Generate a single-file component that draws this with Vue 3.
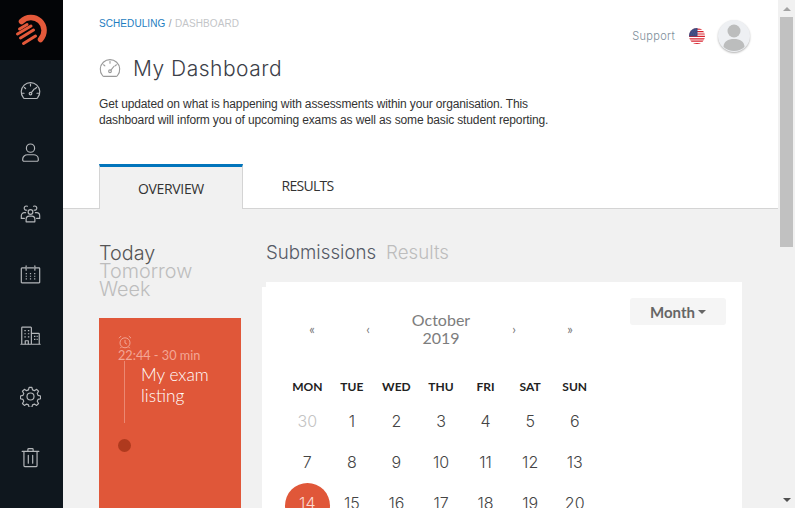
<script setup>
const weekdays = ['MON', 'TUE', 'WED', 'THU', 'FRI', 'SAT', 'SUN']
const days = [
  { n: 30, muted: true }, { n: 1 }, { n: 2 }, { n: 3 }, { n: 4 }, { n: 5 }, { n: 6 },
  { n: 7 }, { n: 8 }, { n: 9 }, { n: 10 }, { n: 11 }, { n: 12 }, { n: 13 },
  { n: 14, active: true }, { n: 15 }, { n: 16 }, { n: 17 }, { n: 18 }, { n: 19 }, { n: 20 }
]
</script>

<template>
  <div class="app">
    <aside class="sidebar">
      <div class="logo">
        <svg width="36" height="36" viewBox="14 12 36 36" fill="none" stroke="#e4593a" stroke-linecap="round">
          <path d="M21.500 21.500A12.500 12.500 0 1 1 40.500 39.500" stroke-width="5.500" />
          <path d="M27 24.500L19.500 29" stroke-width="3" />
          <path d="M31 26L17.500 34" stroke-width="3" />
          <path d="M33.500 30L20.500 38" stroke-width="3" />
          <path d="M35.500 36L23.500 43.500" stroke-width="3" />
        </svg>
      </div>
      <nav class="nav">
        <a class="nav-item">
          <svg class="ico" viewBox="0 0 24 24"><path d="M5.200 20h13.600a1.600 1.600 0 0 0 1.400-.9A10.600 10.600 0 1 0 3.800 19.100a1.600 1.600 0 0 0 1.400.9Z" /><circle cx="12" cy="14.400" r="1.500" /><path d="M13 13.300l3.400-4.300M12 3.600v2M5 7.400l1.400 1.200M19 7.400l-1.400 1.200M2.600 14h2M19.400 14h2" /></svg>
        </a>
        <a class="nav-item">
          <svg class="ico" viewBox="0 0 24 24"><circle cx="12" cy="7" r="4.700" /><path d="M4.500 22h15a1.400 1.400 0 0 0 1.400-1.400v-1.100c0-3-2.600-4.900-5.400-4.900h-7c-2.800 0-5.400 1.900-5.400 4.900v1.100A1.400 1.400 0 0 0 4.500 22Z" /></svg>
        </a>
        <a class="nav-item">
          <svg class="ico" viewBox="0 0 24 24"><circle cx="12" cy="10.200" r="2.700" /><path d="M7 21.500h10v-3c0-2-1.500-3.600-3.500-3.600h-3c-2 0-3.500 1.600-3.500 3.600Z" /><path d="M7.800 8.200a2.400 2.400 0 1 1 .6-4.400M16.200 8.200a2.400 2.400 0 1 0-.6-4.400" /><path d="M6.400 11H5C3 11 1.500 12.600 1.500 14.600v3H5M17.600 11H19c2 0 3.500 1.600 3.500 3.600v3H19" /></svg>
        </a>
        <a class="nav-item">
          <svg class="ico" viewBox="0 0 24 24"><path d="M6 4.500H2.200a.7.7 0 0 0-.7.7v15.600a.7.7 0 0 0 .7.7h19.600a.7.7 0 0 0 .7-.7V5.200a.7.7 0 0 0-.7-.7H18M8.500 4.500h7M7 2v5M17 2v5" /><path class="dots" d="M6.500 11h1.400M11.300 11h1.400M16.100 11h1.400M6.500 14h1.400M11.300 14h1.400M16.100 14h1.400M6.500 17h1.400M11.300 17h1.400M16.100 17h1.400" /></svg>
        </a>
        <a class="nav-item">
          <svg class="ico" viewBox="0 0 24 24"><path d="M2 22V3.200a.7.7 0 0 1 .7-.7h9.600a.7.7 0 0 1 .7.7V22M13 9.500h8.300a.7.7 0 0 1 .7.7V22M1 22h22" /><path class="dots" d="M5 6.500h1.600M9 6.500h1.600M5 10h1.600M9 10h1.600M5 13.500h1.600M9 13.500h1.600M16 13h1.600M19 13h1.200M16 16.500h1.600M19 16.500h1.200M6 22v-4h3.500v4" /></svg>
        </a>
        <a class="nav-item">
          <svg class="ico" viewBox="0 0 24 24"><circle cx="12" cy="12" r="4" /><path d="M10.400 1.500h3.200l.7 2.900 2.200.9 2.500-1.500 2.200 2.200-1.500 2.500.9 2.200 2.900.7v3.200l-2.900.7-.9 2.200 1.500 2.500-2.200 2.200-2.500-1.500-2.200.9-.7 2.900h-3.200l-.7-2.900-2.200-.9-2.500 1.500-2.200-2.200 1.500-2.500-.9-2.200-2.900-.7v-3.200l2.900-.7.9-2.200-1.500-2.500 2.200-2.200 2.500 1.500 2.200-.9Z" /></svg>
        </a>
        <a class="nav-item">
          <svg class="ico" viewBox="0 0 24 24"><path d="M2.500 5h19M9 5V2.800a1 1 0 0 1 1-1h4a1 1 0 0 1 1 1V5M4.500 5v16a1.500 1.500 0 0 0 1.500 1.500h12a1.500 1.500 0 0 0 1.500-1.500V5M9.500 9.500v9M14.500 9.500v9" /></svg>
        </a>
      </nav>
    </aside>

    <main class="main">
      <header class="header">
        <div class="header-left">
          <div class="crumbs"><span class="crumb-link">SCHEDULING</span> <span class="crumb-sep">/</span> <span class="crumb-cur">DASHBOARD</span></div>
          <div class="title-row">
            <svg class="title-ico" viewBox="0 0 24 24"><path d="M5.200 20h13.600a1.600 1.600 0 0 0 1.400-.9A10.600 10.600 0 1 0 3.800 19.100a1.600 1.600 0 0 0 1.400.9Z" /><circle cx="12" cy="14.400" r="1.500" /><path d="M13 13.300l3.400-4.300M12 3.600v2M5 7.400l1.400 1.200M19 7.400l-1.400 1.200" /></svg>
            <h1 class="title">My Dashboard</h1>
          </div>
          <p class="intro">Get updated on what is happening with assessments within your organisation. This dashboard will inform you of upcoming exams as well as some basic student reporting.</p>
        </div>
        <div class="header-right">
          <span class="support">Support</span>
          <svg class="flag" viewBox="0 0 16 16">
            <defs><clipPath id="flagclip"><circle cx="8" cy="8" r="8" /></clipPath></defs>
            <g clip-path="url(#flagclip)">
              <rect width="16" height="16" fill="#fff" />
              <path d="M0 1.200h16M0 3.600h16M0 6h16M0 8.400h16M0 10.800h16M0 13.200h16M0 15.600h16" stroke="#d8212c" stroke-width="1.200" />
              <rect width="8.500" height="8.400" fill="#3c4a80" />
              <path d="M2 2h.1M4 2h.1M6 2h.1M3 4h.1M5 4h.1M2 6h.1M4 6h.1M6 6h.1" stroke="#dfe3f2" stroke-width="1" />
            </g>
          </svg>
          <div class="avatar">
            <svg viewBox="0 0 32 32" width="32" height="32">
              <circle cx="16" cy="11" r="6.500" fill="#bcbdbd" />
              <path d="M5.500 27c0-5.500 4.500-8 10.500-8s10.500 2.500 10.500 8c-3 2.800-6.500 4-10.500 4s-7.500-1.200-10.500-4Z" fill="#bcbdbd" />
            </svg>
          </div>
        </div>
      </header>

      <div class="tabs">
        <div class="tab tab-active">OVERVIEW</div>
        <div class="tab tab-plain">RESULTS</div>
      </div>

      <section class="content">
        <div class="col-left">
          <div class="ranges">
            <div class="range range-on">Today</div>
            <div class="range">Tomorrow</div>
            <div class="range">Week</div>
          </div>
          <div class="event-card">
            <svg class="alarm" viewBox="0 0 14 14"><circle cx="7" cy="7.800" r="5" /><path d="M7 5v3l2 1.200M1 3.200 3.200 1M13 3.200 10.800 1M3.300 12 2.300 13.200M10.700 12l1 1.200" /></svg>
            <div class="event-time">22:44 - 30 min</div>
            <div class="event-body">
              <div class="rail">
                <span class="rail-line"></span>
                <span class="rail-dot"></span>
              </div>
              <div class="event-title">My exam listing</div>
            </div>
          </div>
        </div>

        <div class="col-right">
          <div class="panel-tabs">
            <span class="panel-tab panel-tab-on">Submissions</span>
            <span class="panel-tab">Results</span>
          </div>
          <div class="card-lip"></div>
          <div class="card">
            <div class="calendar">
              <div class="cal-nav">
                <span class="cal-arrow">«</span>
                <span class="cal-arrow">‹</span>
                <span class="cal-month">October<br />2019</span>
                <span class="cal-arrow">›</span>
                <span class="cal-arrow">»</span>
              </div>
              <div class="cal-grid">
                <div v-for="w in weekdays" :key="w" class="cal-head">{{ w }}</div>
                <div v-for="d in days" :key="d.n" class="cal-day" :class="{ muted: d.muted, active: d.active }"><span>{{ d.n }}</span></div>
              </div>
            </div>
            <div class="month-btn">Month<i class="caret"></i></div>
          </div>
        </div>
      </section>
    </main>

    <div class="scrollbar">
      <div class="sb-btn"><i class="sb-up"></i></div>
      <div class="sb-thumb"></div>
      <div class="sb-track"></div>
      <div class="sb-btn"><i class="sb-down"></i></div>
    </div>
  </div>
</template>

<style>
html, body { margin: 0; overflow: hidden; }
</style>

<style scoped>
.app { display: flex; width: 795px; height: 508px; overflow: hidden; background: #f1f1f1; font-family: "Liberation Sans", Arial, sans-serif; }

.sidebar { width: 63px; flex: none; background: #0f171e; display: flex; flex-direction: column; }
.logo { height: 60px; background: #030507; display: flex; align-items: center; justify-content: center; }
.nav { display: flex; flex-direction: column; padding: 1px 2px 0 0; }
.nav-item { height: 61px; display: flex; align-items: center; justify-content: center; }
.ico { width: 21px; height: 21px; fill: none; stroke: #b4b7ba; stroke-width: 1.350; stroke-linejoin: round; stroke-linecap: round; }
.ico .dots { stroke-width: 1.400; stroke-linecap: butt; }

.main { width: 715px; flex: none; display: flex; flex-direction: column; min-width: 0; }
.header { height: 164px; background: #fff; display: flex; justify-content: space-between; padding-left: 36px; box-sizing: border-box; }
.header-left { width: 470px; padding-top: 18px; }
.crumbs { font-size: 10px; line-height: 12px; letter-spacing: 0.080px; word-spacing: 0.500px; color: #c3c5c8; }
.crumb-link { color: #1d7dc0; }
.crumb-sep { color: #9a9a9a; }
.title-row { display: flex; align-items: center; margin-top: 25px; height: 28px; }
.title-ico { width: 22px; height: 22px; fill: none; stroke: #9a9a9a; stroke-width: 1.200; stroke-linecap: round; stroke-linejoin: round; margin-right: 12px; }
.title { margin: 0; font-family: Inter, sans-serif; font-weight: 300; font-size: 21px; line-height: 28px; letter-spacing: 0.500px; color: #3c4048; }
.intro { margin: 13px 0 0; font-size: 12px; line-height: 16px; letter-spacing: -0.130px; color: #333; }
.header-right { display: flex; align-items: center; height: 32px; margin: 20px 28px 0 0; }
.support { font-family: Inter, sans-serif; font-weight: 300; font-size: 11px; letter-spacing: 0.300px; color: #7d8d99; margin-right: 14px; }
.flag { width: 16px; height: 16px; margin-right: 13px; }
.avatar { width: 32px; height: 32px; border-radius: 50%; overflow: hidden; background: #eef0f3; box-shadow: 0 1px 2px rgba(0, 0, 0, 0.300); }

.tabs { height: 45px; box-sizing: border-box; background: #fff; border-bottom: 1px solid #d4d4d4; display: flex; padding-left: 36px; }
.tab { width: 129px; height: 45px; box-sizing: border-box; display: flex; align-items: center; justify-content: center; font-family: "Open Sans", sans-serif; font-size: 14px; letter-spacing: -0.350px; color: #333; }
.tab-active { width: 144px; background: #f1f1f1; border: 1px solid #d4d4d4; border-top: 3px solid #0275bc; border-bottom: 0; color: #333; }
.tab-plain { letter-spacing: -0.700px; padding-bottom: 2px; }

.content { flex: 1; min-height: 0; display: flex; padding: 34px 36px 0 36px; background: #f1f1f1; overflow: hidden; }
.col-left { width: 142px; flex: none; }
.ranges { height: 74px; margin-top: 1px; }
.range { font-family: Inter, sans-serif; font-weight: 300; font-size: 19.800px; line-height: 18px; color: #bdbdbd; }
.range-on { color: #555; }
.event-card { height: 230px; background: #e05739; padding: 17px 0 0 19px; box-sizing: border-box; }
.alarm { display: block; width: 14px; height: 14px; fill: none; stroke: #f2a595; stroke-width: 1; margin-bottom: -1px; }
.event-time { font-family: Lato, sans-serif; font-size: 12.700px; font-weight: 400; line-height: 14px; color: #f3a695; }
.event-body { display: flex; }
.rail { width: 13px; flex: none; display: flex; flex-direction: column; align-items: center; }
.rail-line { width: 1px; height: 62px; margin-top: -1px; background: #eb8872; }
.rail-dot { width: 13px; height: 13px; margin-top: 16px; border-radius: 50%; background: #af3a1e; }
.event-title { width: 90px; margin: 2px 0 0 10px; font-family: Lato, sans-serif; font-weight: 300; font-size: 17.300px; line-height: 21px; color: #fff; }

.col-right { margin-left: 21px; width: 480px; flex: none; }
.panel-tabs { height: 39px; padding-left: 4px; box-sizing: border-box; display: flex; gap: 10px; }
.panel-tab { font-family: Inter, sans-serif; font-weight: 300; font-size: 18.700px; line-height: 20px; color: #bdbdbd; }
.panel-tab-on { color: #555a66; }
.card-lip { height: 5px; margin-left: 4px; background: #fff; }
.card { height: 300px; background: #fff; display: flex; justify-content: space-between; padding: 11px 16px 0 23px; box-sizing: border-box; }
.calendar { width: 312px; }
.cal-nav { display: flex; align-items: center; height: 40px; margin: 11px -1px 0; }
.cal-arrow { width: 56px; flex: none; text-align: center; font-family: Lato, sans-serif; font-size: 13px; color: #777; }
.cal-month { width: 90px; flex: none; text-align: center; font-family: Lato, sans-serif; font-size: 16px; line-height: 18px; color: #7d7d7d; }
.cal-grid { display: grid; grid-template-columns: repeat(7, minmax(0, 1fr)); grid-template-rows: 23px; grid-auto-rows: 41px; margin-top: 28px; }
.cal-head { align-self: start; height: 19px; font-family: Lato, sans-serif; font-size: 12px; font-weight: 700; line-height: 19px; text-align: center; color: #222; }
.cal-day { display: flex; align-items: center; justify-content: center; font-family: Inter, sans-serif; font-weight: 300; font-size: 16px; color: #444; }
.cal-day span { display: flex; align-items: center; justify-content: center; width: 45px; height: 45px; box-sizing: border-box; border-radius: 50%; flex: none; padding-bottom: 5px; margin-top: 5px; }
.cal-day.muted { color: #c4c4c4; }
.cal-day.active span { background: #e05739; color: #fbd9d1; }
.month-btn { width: 96px; height: 27px; box-sizing: border-box; background: #f5f5f5; border-radius: 3px; display: flex; align-items: center; justify-content: center; font-family: Lato, sans-serif; font-weight: 700; font-size: 15px; color: #666; }
.caret { width: 0; height: 0; margin-left: 3px; border: 4px solid transparent; border-top: 4px solid #666; border-bottom: 0; }

.scrollbar { width: 17px; flex: none; display: flex; flex-direction: column; background: #f1f1f1; }
.sb-btn { height: 17px; flex: none; display: flex; align-items: center; justify-content: center; }
.sb-up, .sb-down { width: 0; height: 0; border: 4px solid transparent; }
.sb-up { border-bottom: 4px solid #a3a3a3; border-top: 0; }
.sb-down { border-top: 4px solid #505050; border-bottom: 0; }
.sb-thumb { height: 230px; margin: 0 2px; background: #c1c1c1; flex: none; }
.sb-track { flex: 1; }
</style>
